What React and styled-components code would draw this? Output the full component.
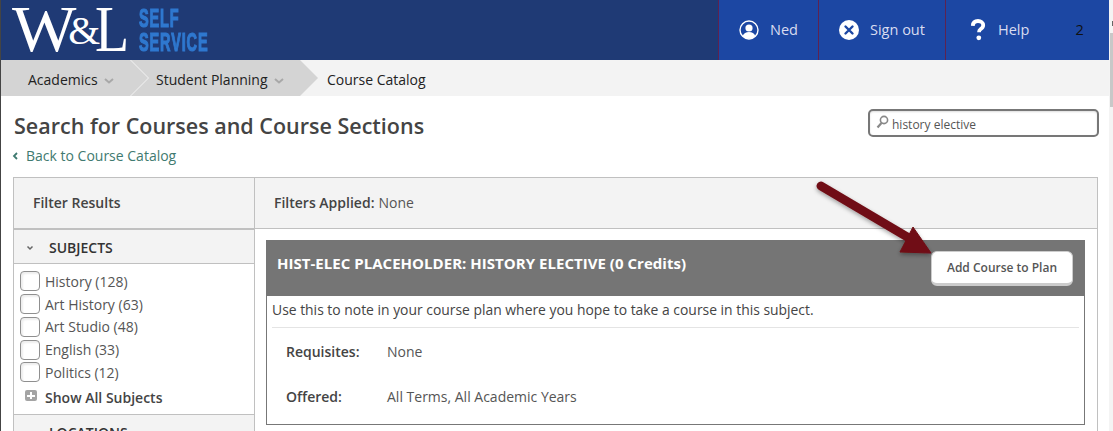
import React from "react";
import styled, { createGlobalStyle } from "styled-components";

const Global = createGlobalStyle`
  html, body { margin: 0; padding: 0; height: 431px; overflow: hidden; background: #fff; }
  body { font-family: "Open Sans", "Liberation Sans", sans-serif; color: #444; font-size: 14px; }
  * { box-sizing: border-box; }
`;

const Page = styled.div`
  position: relative;
  width: 1113px;
  height: 431px;
  overflow: hidden;
  border-left: 1px solid #444;
  padding-right: 4px;
`;
const Scrollbar = styled.div`
  position: absolute;
  right: 0;
  top: 0;
  width: 4px;
  height: 431px;
  background: #f4f4f4;
  &::before {
    content: "";
    position: absolute;
    left: 3px;
    top: 21px;
    width: 1px;
    height: 5px;
    background: #666;
  }
  &::after {
    content: "";
    position: absolute;
    left: 1px;
    top: 33px;
    width: 3px;
    height: 74px;
    background: #c8c8c8;
  }
`;
const Header = styled.header`
  height: 60px;
  background: #1f3a75;
  display: flex;
  justify-content: space-between;
`;
const Logo = styled.div`
  display: flex;
  align-items: flex-start;
  padding-left: 11px;
`;
const LogoMark = styled.div`
  font-family: "Liberation Serif", serif;
  color: #fff;
  font-size: 65px;
  line-height: 60px;
  width: 117px;
  white-space: nowrap;
  display: flex;
  align-items: baseline;
  height: 60px;
  margin-top: -1px;
`;
const LogoW = styled.span`
  display: inline-block;
  transform: scaleX(1.05);
  transform-origin: left center;
`;
const Amp = styled.span`
  display: inline-block;
  font-size: 41px;
  margin: 0 -5px 0 -5px;
  transform: translateY(-7px);
`;
const LogoL = styled.span`
  display: inline-block;
  transform: scaleX(0.86);
  transform-origin: left center;
`;
const LogoWords = styled.div`
  margin-left: 10px;
  padding-top: 6px;
  color: #2f78cf;
  font-family: "Liberation Sans", sans-serif;
  font-weight: 700;
  font-size: 25px;
  line-height: 24px;
  letter-spacing: 1.5px;
  -webkit-text-stroke: 1.2px #2f78cf;
  transform: scaleX(0.58);
  transform-origin: left top;
  white-space: nowrap;
`;
const Tools = styled.nav`
  display: flex;
  width: 391px;
  background: #1c47a3;
  flex: none;
`;
const Tool = styled.div`
  width: ${(p) => p.$w}px;
  border-left: 1px solid #5d2250;
  display: flex;
  align-items: center;
  padding-left: ${(p) => p.$pad}px;
  padding-bottom: 1px;
  gap: ${(p) => p.$gap}px;
  color: #d9dcf0;
  font-size: 14.5px;
  flex: none;
`;
const Count = styled.span`
  color: #111;
  font-size: 14.5px;
  margin-left: 34px;
`;
const Crumbs = styled.div`
  height: 36px;
  background: #f3f3f3;
  display: flex;
`;
const Crumb = styled.div`
  position: relative;
  height: 36px;
  width: ${(p) => p.$w}px;
  flex: none;
  background: ${(p) => (p.$current ? "transparent" : "#d4d4d4")};
  color: #222;
  display: flex;
  align-items: center;
  gap: 6px;
  font-size: 14px;
  padding-left: ${(p) => p.$pad}px;
  padding-top: 3px;
  ${(p) =>
    p.$current
      ? ""
      : `&::after {
    content: "";
    position: absolute;
    right: -18px;
    top: 0;
    width: 18px;
    height: 36px;
    background: #d4d4d4;
    clip-path: polygon(0 0, 100% 50%, 0 100%);
    z-index: 2;
  }`}
  ${(p) =>
    p.$sep
      ? `&::before {
    content: "";
    position: absolute;
    left: 0;
    top: 0;
    width: 19px;
    height: 36px;
    background: #f3f3f3;
    clip-path: polygon(0 0, 1px 0, 100% 50%, 1px 100%, 0 100%, 18px 50%);
    z-index: 3;
  }`
      : ""}
`;
const Caret = styled.svg`
  width: 10px;
  height: 6px;
  margin-top: 3px;
  flex: none;
`;
const Main = styled.main`
  padding: 0 12px 0 12px;
`;
const TitleRow = styled.div`
  display: flex;
  justify-content: space-between;
  align-items: flex-start;
  height: 81px;
`;
const TitleBlock = styled.div`
  padding-top: 15px;
  padding-left: 1px;
`;
const Title = styled.h1`
  margin: 0;
  font-size: 21.5px;
  line-height: 30px;
  font-weight: 600;
  color: #444;
`;
const Back = styled.a`
  display: flex;
  align-items: center;
  gap: 8px;
  color: #3f7a70;
  font-size: 14px;
  line-height: 20px;
  margin-top: 5px;
  margin-left: -2px;
`;
const Search = styled.div`
  margin-top: 13px;
  margin-right: -2px;
  width: 231px;
  height: 28px;
  border: 2px solid #777;
  border-radius: 5px;
  display: flex;
  align-items: center;
  gap: 3px;
  padding: 3px 0 0 6px;
  color: #555;
  font-size: 12px;
  box-shadow: inset 0 1px 2px #ddd;
`;
const SearchIcon = styled.svg`
  width: 13px;
  height: 14px;
  margin-top: -5px;
  flex: none;
`;
const Panel = styled.section`
  width: 1085px;
  display: grid;
  grid-template-columns: 241px 1fr;
  border: 1px solid #c0c0c0;
  border-bottom: 0;
  height: 260px;
`;
const Side = styled.aside`
  border-right: 1px solid #c0c0c0;
  display: flex;
  flex-direction: column;
`;
const SideTitle = styled.div`
  height: 52px;
  background: #f3f3f3;
  border-bottom: 2px solid #c0c0c0;
  display: flex;
  align-items: center;
  padding: 0 0 2px 19px;
  font-size: 14px;
  font-weight: 600;
  color: #444;
`;
const GroupHead = styled.div`
  height: 34px;
  background: #f3f3f3;
  border-bottom: ${(p) => (p.$open ? "1px solid #c0c0c0" : "0")};
  display: flex;
  align-items: center;
  gap: 15px;
  padding-left: 12px;
  padding-top: 2px;
  font-size: 14px;
  font-weight: 600;
  color: #333;
`;
const Checks = styled.div`
  display: flex;
  flex-direction: column;
  padding: 6px 0 0 6px;
`;
const CheckRow = styled.label`
  display: flex;
  align-items: center;
  height: 22.75px;
  gap: 5px;
  font-size: 14px;
  color: #555;
`;
const Box = styled.span`
  width: 20px;
  height: 20px;
  border: 1px solid #8f8f8f;
  border-radius: 4px;
  background: #fff;
  box-shadow: inset 2px 2px 2px #eee;
  flex: none;
`;
const ShowAll = styled.div`
  display: flex;
  align-items: center;
  gap: 8px;
  height: 24px;
  margin-top: 2px;
  margin-left: 6px;
  font-size: 14px;
  font-weight: 600;
  color: #444;
`;
const Plus = styled.span`
  width: 12px;
  height: 11px;
  margin-left: 5px;
  margin-top: -4px;
  border-radius: 2px;
  background: #a4a4a4;
  position: relative;
  flex: none;
  &::before, &::after {
    content: "";
    position: absolute;
    background: #fff;
  }
  &::before { left: 2px; right: 2px; top: 4.5px; height: 2px; }
  &::after { top: 2px; bottom: 2px; left: 5px; width: 2px; }
`;
const GroupSep = styled.div`
  height: 1px;
  background: #c0c0c0;
  margin-top: 4px;
`;
const Results = styled.div`
  display: flex;
  flex-direction: column;
`;
const Applied = styled.div`
  height: 51px;
  background: #f3f3f3;
  border-bottom: 1px solid #c0c0c0;
  display: flex;
  align-items: center;
  padding: 0 0 2px 19px;
  gap: 4px;
  font-size: 14px;
  color: #555;
  & b { font-weight: 600; color: #444; }
`;
const Course = styled.article`
  margin: 11px 12px 0 11px;
  height: 185px;
  border: 1px solid #777;
  border-top: 0;
`;
const CourseHead = styled.div`
  height: 56px;
  margin: 0 -1px;
  background: #757575;
  display: flex;
  justify-content: space-between;
  align-items: flex-start;
  padding: 11px 12px 0 11px;
`;
const CourseName = styled.h2`
  margin: 2px 0 0;
  font-size: 15px;
  letter-spacing: 0.03px;
  line-height: 20px;
  font-weight: 700;
  color: #fff;
  white-space: nowrap;
`;
const AddButton = styled.button`
  width: 142px;
  height: 35px;
  background: #fff;
  border: 1px solid #ccc;
  border-bottom: 3px solid #ccc;
  border-radius: 6px;
  font: 600 12px "Open Sans", sans-serif;
  color: #555;
  padding: 0;
`;
const Desc = styled.p`
  margin: 0 5px;
  height: 32px;
  line-height: 28px;
  font-size: 13.9px;
  color: #444;
  border-bottom: 1px solid #e4e4e4;
`;
const Facts = styled.dl`
  margin: 0;
  padding: 10px 0 0 19px;
  display: grid;
  grid-template-columns: 101px 1fr;
  grid-auto-rows: 45px;
  font-size: 14px;
  line-height: 28px;
  & dt { font-weight: 600; color: #444; }
  & dd { margin: 0; color: #555; }
`;
const Arrow = styled.svg`
  position: absolute;
  left: 800px;
  top: 170px;
  width: 150px;
  height: 100px;
  pointer-events: none;
`;

const CaretIcon = () => (
  <Caret viewBox="0 0 10 6">
    <path d="M1 1l4 3.5L9 1" fill="none" stroke="#a8a8a8" strokeWidth="2" />
  </Caret>
);
const MiniChevron = () => (
  <svg width="8" height="6" viewBox="0 0 8 6">
    <path d="M1.5 1.5L4 4l2.5-2.5" fill="none" stroke="#666" strokeWidth="1.5" />
  </svg>
);

const filters = ["History (128)", "Art History (63)", "Art Studio (48)", "English (33)", "Politics (12)"];

export default function App() {
  return (
    <Page>
      <Global />
      <Header>
        <Logo>
          <LogoMark>
            <LogoW>W</LogoW><Amp>&amp;</Amp><LogoL>L</LogoL>
          </LogoMark>
          <LogoWords>
            SELF
            <br />
            SERVICE
          </LogoWords>
        </Logo>
        <Tools>
          <Tool $w={100} $pad={20} $gap={11}>
            <svg width="20" height="20" viewBox="0 0 20 20">
              <circle cx="10" cy="10" r="9" fill="none" stroke="#fff" strokeWidth="1.4" />
              <circle cx="10" cy="8" r="3.6" fill="#fff" />
              <path d="M3.6 16.2c1-2.9 3.4-4.2 6.4-4.2s5.400 1.300 6.400 4.200A9 9 0 0 1 3.600 16.200z" fill="#fff" />
            </svg>
            Ned
          </Tool>
          <Tool $w={127} $pad={20} $gap={11}>
            <svg width="20" height="20" viewBox="0 0 20 20">
              <circle cx="10" cy="10" r="10" fill="#fff" />
              <path d="M6.500 6.500l7 7M13.500 6.500l-7 7" stroke="#1c47a3" strokeWidth="2.400" strokeLinecap="round" />
            </svg>
            Sign out
          </Tool>
          <Tool $w={164} $pad={24} $gap={12}>
            <svg width="16" height="22" viewBox="0 0 16 22">
              <path d="M2.800 6.800C3 3.500 5.200 2 8 2c3 0 5.200 1.700 5.200 4.200 0 2-1.300 3-2.700 4-1.100.8-1.500 1.400-1.500 3" fill="none" stroke="#fff" strokeWidth="3.800" />
              <circle cx="8.800" cy="18.800" r="2.400" fill="#fff" />
            </svg>
            Help
            <Count>2</Count>
          </Tool>
        </Tools>
      </Header>
      <Crumbs>
        <Crumb $w={129} $pad={27}>
          Academics <CaretIcon />
        </Crumb>
        <Crumb $w={170} $sep $pad={26}>
          Student Planning <CaretIcon />
        </Crumb>
        <Crumb $w={300} $current $pad={27}>
          Course Catalog
        </Crumb>
      </Crumbs>
      <Main>
        <TitleRow>
          <TitleBlock>
            <Title>Search for Courses and Course Sections</Title>
            <Back>
              <svg width="6" height="8" viewBox="0 0 6 8">
                <path d="M5 1L2 4l3 3" fill="none" stroke="#3f7a70" strokeWidth="1.800" />
              </svg>
              Back to Course Catalog
            </Back>
          </TitleBlock>
          <Search>
            <SearchIcon viewBox="0 0 13 14">
              <circle cx="8" cy="5" r="3.600" fill="none" stroke="#888" strokeWidth="1.600" />
              <path d="M5.500 8L1.500 12.500" stroke="#888" strokeWidth="2.200" />
            </SearchIcon>
            history elective
          </Search>
        </TitleRow>
        <Panel>
          <Side>
            <SideTitle>Filter Results</SideTitle>
            <GroupHead $open>
              <MiniChevron />
              SUBJECTS
            </GroupHead>
            <Checks>
              {filters.map((f) => (
                <CheckRow key={f}>
                  <Box />
                  {f}
                </CheckRow>
              ))}
            </Checks>
            <ShowAll>
              <Plus />
              Show All Subjects
            </ShowAll>
            <GroupSep />
            <GroupHead>
              <MiniChevron />
              LOCATIONS
            </GroupHead>
          </Side>
          <Results>
            <Applied>
              <b>Filters Applied:</b> None
            </Applied>
            <Course>
              <CourseHead>
                <CourseName>HIST-ELEC PLACEHOLDER: HISTORY ELECTIVE (0 Credits)</CourseName>
                <AddButton>Add Course to Plan</AddButton>
              </CourseHead>
              <Desc>Use this to note in your course plan where you hope to take a course in this subject.</Desc>
              <Facts>
                <dt>Requisites:</dt>
                <dd>None</dd>
                <dt>Offered:</dt>
                <dd>All Terms, All Academic Years</dd>
              </Facts>
            </Course>
          </Results>
        </Panel>
      </Main>
      <Arrow viewBox="0 0 150 100">
        <defs>
          <filter id="arrowShadow" x="-20%" y="-20%" width="140%" height="140%">
            <feDropShadow dx="0" dy="2" stdDeviation="2" floodColor="#000" floodOpacity="0.35" />
          </filter>
        </defs>
        <g filter="url(#arrowShadow)">
          <path d="M20 16L108 68" stroke="#6f0d14" strokeWidth="9" strokeLinecap="round" />
          <path d="M112 57L130 83L99 82Z" fill="#6f0d14" stroke="#6f0d14" strokeWidth="1" />
        </g>
      </Arrow>
      <Scrollbar />
    </Page>
  );
}
